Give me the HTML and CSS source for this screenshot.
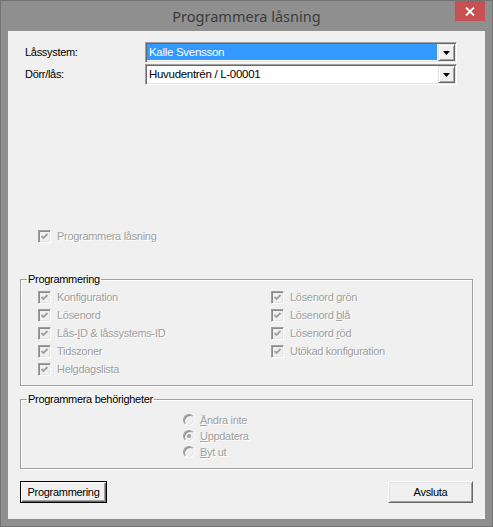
FILE: index.html
```html
<!DOCTYPE html>
<html lang="sv">
<head>
<meta charset="utf-8">
<title>Programmera låsning</title>
<link rel="stylesheet" href="styles.css">
</head>
<body>
<div class="window">
  <div class="titlebar">
    <div class="title-spacer"></div>
    <div class="title">Programmera låsning</div>
    <div class="close"><svg width="10" height="9" viewBox="0 0 10 9"><path d="M1 0.5 L9 8.5 M9 0.5 L1 8.5" stroke="#fff" stroke-width="1.8" fill="none"/></svg></div>
  </div>
  <div class="client">
    <div class="form">
      <div class="form-row">
        <span class="label">Låssystem:</span>
        <div class="combo">
          <span class="combo-text sel">Kalle Svensson</span>
          <span class="combo-btn"><svg width="7" height="4" viewBox="0 0 7 4"><polygon points="0,0 7,0 3.5,4" fill="#000"/></svg></span>
        </div>
      </div>
      <div class="form-row">
        <span class="label">Dörr/lås:</span>
        <div class="combo">
          <span class="combo-text">Huvudentrén / L-00001</span>
          <span class="combo-btn"><svg width="7" height="4" viewBox="0 0 7 4"><polygon points="0,0 7,0 3.5,4" fill="#000"/></svg></span>
        </div>
      </div>
    </div>

    <div class="check main-check">
      <span class="box"><svg width="9" height="9" viewBox="0 0 9 9"><path d="M1.5 4 L3.5 6 L7.5 2" stroke="#a0a0a0" stroke-width="1.8" fill="none"/></svg></span>
      <span class="dis">Programmera låsning</span>
    </div>

    <fieldset class="group prog">
      <legend>Programmering</legend>
      <div class="check-grid">
        <div class="check"><span class="box"><svg width="9" height="9" viewBox="0 0 9 9"><path d="M1.5 4 L3.5 6 L7.5 2" stroke="#a0a0a0" stroke-width="1.8" fill="none"/></svg></span><span class="dis">Konfiguration</span></div>
        <div class="check"><span class="box"><svg width="9" height="9" viewBox="0 0 9 9"><path d="M1.5 4 L3.5 6 L7.5 2" stroke="#a0a0a0" stroke-width="1.8" fill="none"/></svg></span><span class="dis">Lösenord</span></div>
        <div class="check"><span class="box"><svg width="9" height="9" viewBox="0 0 9 9"><path d="M1.5 4 L3.5 6 L7.5 2" stroke="#a0a0a0" stroke-width="1.8" fill="none"/></svg></span><span class="dis">Lås-<u>I</u>D &amp; låssystems-ID</span></div>
        <div class="check"><span class="box"><svg width="9" height="9" viewBox="0 0 9 9"><path d="M1.5 4 L3.5 6 L7.5 2" stroke="#a0a0a0" stroke-width="1.8" fill="none"/></svg></span><span class="dis">Tidszoner</span></div>
        <div class="check"><span class="box"><svg width="9" height="9" viewBox="0 0 9 9"><path d="M1.5 4 L3.5 6 L7.5 2" stroke="#a0a0a0" stroke-width="1.8" fill="none"/></svg></span><span class="dis">Helgdagslista</span></div>
        <div class="check"><span class="box"><svg width="9" height="9" viewBox="0 0 9 9"><path d="M1.5 4 L3.5 6 L7.5 2" stroke="#a0a0a0" stroke-width="1.8" fill="none"/></svg></span><span class="dis">Lösenord <u>g</u>rön</span></div>
        <div class="check"><span class="box"><svg width="9" height="9" viewBox="0 0 9 9"><path d="M1.5 4 L3.5 6 L7.5 2" stroke="#a0a0a0" stroke-width="1.8" fill="none"/></svg></span><span class="dis">Lösenord <u>b</u>lå</span></div>
        <div class="check"><span class="box"><svg width="9" height="9" viewBox="0 0 9 9"><path d="M1.5 4 L3.5 6 L7.5 2" stroke="#a0a0a0" stroke-width="1.8" fill="none"/></svg></span><span class="dis">Lösenord <u>r</u>öd</span></div>
        <div class="check"><span class="box"><svg width="9" height="9" viewBox="0 0 9 9"><path d="M1.5 4 L3.5 6 L7.5 2" stroke="#a0a0a0" stroke-width="1.8" fill="none"/></svg></span><span class="dis">Utökad konfiguration</span></div>
      </div>
    </fieldset>

    <fieldset class="group rights">
      <legend>Programmera behörigheter</legend>
      <div class="radios">
        <div class="radio"><span class="circle"></span><span class="dis"><u>Ä</u>ndra inte</span></div>
        <div class="radio"><span class="circle on"></span><span class="dis"><u>U</u>ppdatera</span></div>
        <div class="radio"><span class="circle"></span><span class="dis"><u>B</u>yt ut</span></div>
      </div>
    </fieldset>

    <div class="buttons">
      <button class="btn default">Programmering</button>
      <button class="btn exit">Avsluta</button>
    </div>
  </div>
</div>
</body>
</html>
```

FILE: styles.css
```css
html, body {
  margin: 0;
  padding: 0;
  background: #ffffff;
}

body {
  font-family: "Liberation Sans", Arial, sans-serif;
  font-size: 11px;
  letter-spacing: -0.3px;
  color: #000;
}

.window {
  width: 493px;
  height: 527px;
  box-sizing: border-box;
  background: #8f8f8f;
  border: 1px solid #737373;
  display: flex;
  flex-direction: column;
}

.titlebar {
  height: 30px;
  display: flex;
  align-items: flex-start;
  flex: none;
}

.title-spacer {
  width: 37px;
}

.title {
  flex: 1;
  text-align: center;
  font-family: "Noto Sans", "Open Sans", sans-serif;
  font-size: 14.5px;
  letter-spacing: 0;
  line-height: 30px;
  color: #3c3c3c;
}

.close {
  width: 30px;
  height: 20px;
  margin-right: 7px;
  background: #c75050;
  display: flex;
  align-items: center;
  justify-content: center;
}

.client {
  flex: 1;
  margin: 0 7px 7px;
  background: #f0f0f0;
  display: flex;
  flex-direction: column;
}

.form {
  padding: 11px 0 0 17px;
  display: flex;
  flex-direction: column;
  gap: 1px;
}

.form-row {
  display: flex;
  height: 21px;
}

.label {
  width: 120px;
  line-height: 21px;
}

.combo {
  width: 312px;
  height: 21px;
  box-sizing: border-box;
  border: 1px solid;
  border-color: #a0a0a0 #ffffff #ffffff #a0a0a0;
  box-shadow: inset 1px 1px #696969, inset -1px -1px #e3e3e3;
  background: #fff;
  padding: 1px;
  display: flex;
}

.combo-text {
  flex: 1;
  padding-left: 2px;
  margin-right: 1px;
  line-height: 16px;
  height: 16px;
  font-size: 11.5px;
}

.combo-text.sel {
  background: #3399ff;
  color: #fff;
}

.combo-btn {
  width: 17px;
  height: 17px;
  box-sizing: border-box;
  background: #f0f0f0;
  border: 1px solid;
  border-color: #e3e3e3 #696969 #696969 #e3e3e3;
  box-shadow: inset 1px 1px #fff, inset -1px -1px #a0a0a0;
  display: flex;
  align-items: center;
  justify-content: center;
}

.check {
  display: flex;
  align-items: center;
  gap: 6px;
  height: 18px;
}

.main-check {
  margin: 142px 0 0 30px;
}

.box {
  width: 13px;
  height: 13px;
  box-sizing: border-box;
  border: 1px solid;
  border-color: #a0a0a0 #ffffff #ffffff #a0a0a0;
  box-shadow: inset 1px 1px #8a8a8a, inset -1px -1px #e3e3e3;
  background: #f0f0f0;
  display: flex;
  align-items: center;
  justify-content: center;
  flex: none;
}

.dis {
  color: #a0a0a0;
  text-shadow: 1px 1px 0 #ffffff;
}

.group {
  margin: 27px 12px 0;
  border: 1px solid #a0a0a0;
  box-shadow: 1px 1px 0 #fff, inset 1px 1px 0 #fff;
  padding: 2px 6px 7px;
  min-width: 0;
}

.group legend {
  padding: 0 1px;
  line-height: 14px;
  color: #000;
}

.check-grid {
  display: grid;
  grid-template-columns: 233px 1fr;
  grid-template-rows: repeat(5, 18px);
  grid-auto-flow: column;
  padding-left: 11px;
}

.rights {
  margin-top: 6px;
  padding-top: 6px;
  padding-bottom: 8px;
}

.radios {
  padding-left: 156px;
  display: flex;
  flex-direction: column;
}

.radio {
  display: flex;
  align-items: center;
  gap: 5px;
  height: 16px;
}

.circle {
  width: 12px;
  height: 12px;
  box-sizing: border-box;
  border-radius: 50%;
  border: 1px solid;
  border-color: #a0a0a0 #ffffff #ffffff #a0a0a0;
  box-shadow: inset 1px 1px #8a8a8a, inset -1px -1px #e3e3e3;
  background: #f0f0f0;
  display: flex;
  align-items: center;
  justify-content: center;
  flex: none;
}

.circle.on::after {
  content: "";
  width: 4px;
  height: 4px;
  border-radius: 50%;
  background: #a0a0a0;
}

.buttons {
  margin-top: 12px;
  padding: 0 12px;
  display: flex;
  justify-content: space-between;
}

.btn {
  height: 22px;
  box-sizing: border-box;
  font-family: "Liberation Sans", Arial, sans-serif;
  font-size: 11px;
  letter-spacing: -0.3px;
  color: #000;
  background: #f0f0f0;
  padding: 0;
  margin: 0;
}

.btn.default {
  width: 87px;
  border: 1px solid #000;
  box-shadow: inset 1px 1px #fff, inset -1px -1px #696969, inset -2px -2px #a0a0a0;
}

.btn.exit {
  width: 85px;
  border: 1px solid;
  border-color: #fff #696969 #696969 #fff;
  box-shadow: inset 1px 1px #e3e3e3, inset -1px -1px #a0a0a0;
}
```
